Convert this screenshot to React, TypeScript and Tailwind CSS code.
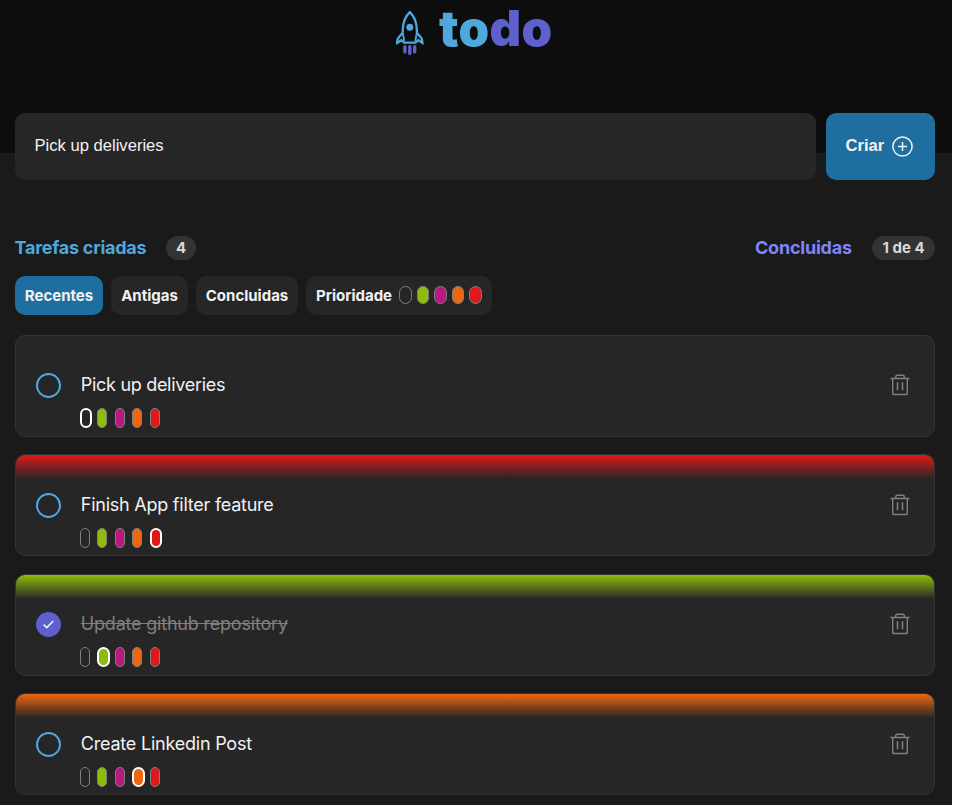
import React from "react";
import clsx from "clsx";

const PILLS = ["bg-transparent", "bg-[#8fbc0b]", "bg-[#ba1880]", "bg-[#ee6611]", "bg-[#df1919]"];

const TASKS = [
  { title: "Pick up deliveries", level: 0, done: false, glow: "", spacing: "tracking-[-0.3px]" },
  { title: "Finish App filter feature", level: 4, done: false, glow: "from-[#df1919]", spacing: "tracking-[-0.24px]" },
  { title: "Update github repository", level: 1, done: true, glow: "from-[#8fbc0b]", spacing: "tracking-[-0.2px]" },
  { title: "Create Linkedin Post", level: 3, done: false, glow: "from-[#ee6611]", spacing: "tracking-[-0.22px]" },
];

function Rocket() {
  return (
    <svg width="28" height="46" viewBox="0 0 28 46" fill="none" className="mt-[10px] shrink-0">
      <path
        d="M13.8 2.2C9.4 6.4 7 12.500 6.800 19.500L6.600 23 3 27C1.300 29 1.100 30.600 1.100 33l4.300-2.800 2.600 2.400h11.600l2.600-2.400 4.300 2.800c0-2.400-.2-4-1.900-6L21 23l-.2-3.500C20.600 12.500 18.200 6.400 13.800 2.200Z"
        stroke="#4EA8DE"
        strokeWidth="2.300"
      />
      <path d="M6.700 22.500 8.300 31M20.900 22.500 19.300 31" stroke="#4EA8DE" strokeWidth="1.800" />
      <circle cx="13.800" cy="17.300" r="3.500" fill="#4EA8DE" />
      <path d="M8.900 36.700v5.200M13.800 36.700v6.800M18.700 36.700v5.200" stroke="#5E60CE" strokeWidth="3.400" strokeLinecap="round" />
    </svg>
  );
}

function Trash() {
  return (
    <svg width="20" height="22" viewBox="0 0 20 22" fill="none" stroke="#808080" strokeWidth="1.400">
      <path d="M.5 4.500h19M2.700 4.500v15.300q0 .7.700.7h13.200q.7 0 .7-.7V4.500M5.700 4.500V2.800q0-1.500 1.500-1.500h5.600q1.500 0 1.500 1.500v1.700" />
      <path d="M7.500 8.300v7.900M12.500 8.300v7.900" strokeWidth="1.600" />
    </svg>
  );
}

function Priorities({ level }: { level: number }) {
  return (
    <div className="flex">
      {PILLS.map((color, i) => (
        <div key={i} className="w-[17.5px]">
          <div
            className={clsx(
              "h-5 rounded-full",
              color,
              i === level ? "w-[12.5px] border-2 border-white" : "w-[10px] border border-[#808080]"
            )}
          />
        </div>
      ))}
    </div>
  );
}

function Task({ title, level, done, glow, spacing }: (typeof TASKS)[number]) {
  return (
    <li className="h-[102px] overflow-hidden rounded-[10px] border border-[#333333] bg-[#262626]">
      <div className={clsx("h-6", glow && "bg-linear-to-b to-transparent", glow)} />
      <div className="flex pt-[13.500px] pl-5 pr-[23.600px]">
        <div
          className={clsx(
            "flex size-[25px] shrink-0 items-center justify-center rounded-full",
            done ? "bg-[#5E60CE]" : "border-2 border-[#4EA8DE]"
          )}
        >
          {done && (
            <svg width="11" height="9" viewBox="0 0 11 9" fill="none" stroke="#f2f2f2" strokeWidth="1.500">
              <path d="m.6 4.600 3.200 3L10.200 1" />
            </svg>
          )}
        </div>
        <div className="ml-[19.800px] flex-1">
          <p
            className={clsx(
              "h-[35px] text-[18px] leading-6",
              spacing,
              done ? "text-[#808080] line-through" : "text-[#f2f2f2]"
            )}
          >
            {title}
          </p>
          <div className="-ml-px">
            <Priorities level={level} />
          </div>
        </div>
        <div className="pt-px">
          <Trash />
        </div>
      </div>
    </li>
  );
}

export default function App() {
  return (
    <div className="h-[805px] w-[952px] overflow-hidden bg-[#1a1a1a] font-['Inter',sans-serif] text-[#f2f2f2]">
      <header className="flex h-[153px] bg-[#0d0d0d] pl-[396px]">
        <Rocket />
        <h1 className="ml-[15px] text-[49px] leading-[58px] font-black tracking-[0.4px] text-[#4EA8DE]">
          to<span className="text-[#5E60CE]">do</span>
        </h1>
      </header>
      <main className="-mt-10 ml-[15px] w-[920px]">
        <form className="flex h-[67px] gap-[10px] font-['Liberation_Sans',Arial,sans-serif] text-[16.600px]">
          <div className="flex w-[801px] items-center rounded-[10px] bg-[#262626] pl-[19.500px]">
            Pick up deliveries
          </div>
          <button type="button" className="flex w-[109px] items-center rounded-[10px] bg-[#1e6f9f] pl-5 font-bold">
            <span className="-ml-[0.500px] w-[46.500px] text-left">Criar</span>
            <svg width="21" height="21" viewBox="0 0 21 21" fill="none" stroke="#f2f2f2" strokeWidth="1.500">
              <circle cx="10.500" cy="10.500" r="9.600" />
              <path d="M10.500 6v9M6 10.500h9" />
            </svg>
          </button>
        </form>
        <div className="mt-14 flex h-6 items-center text-[18px] font-bold">
          <h2 className="-ml-[0.500px] w-[151.500px] pb-[2px] tracking-[-0.250px] text-[#4EA8DE]">Tarefas criadas</h2>
          <span className="flex h-6 w-[30px] items-center justify-center rounded-full bg-[#333333] text-[15px] text-[#d9d9d9]">4</span>
          <h2 className="ml-auto w-[117px] pb-[2px] tracking-[-0.220px] text-[#8284fa]">Concluidas</h2>
          <span className="flex h-6 w-[63px] items-center justify-center rounded-full bg-[#333333] text-[15px] text-[#d9d9d9]">1 de 4</span>
        </div>
        <nav className="mt-4 flex h-[39px] gap-2 text-[15px] font-bold">
          <button className="w-[88px] rounded-[10px] bg-[#1e6f9f] pt-[2px]">Recentes</button>
          <button className="w-[77px] rounded-[10px] bg-[#262626] pt-[2px]">Antigas</button>
          <button className="w-[102px] rounded-[10px] bg-[#262626] pt-[2px]">Concluidas</button>
          <div className="flex w-[186px] items-center rounded-[10px] bg-[#262626] pl-[10px]">
            <span className="w-[83px] pt-[2px]">Prioridade</span>
            <div className="flex gap-[5px] pb-[2px]">
              {PILLS.map((color, i) => (
                <i key={i} className={clsx("h-[18px] w-[12.5px] rounded-full border border-[#808080]", color)} />
              ))}
            </div>
          </div>
        </nav>
        <ul className="mt-[19.600px] flex flex-col gap-[17.500px]">
          {TASKS.map((task) => (
            <Task key={task.title} {...task} />
          ))}
        </ul>
      </main>
    </div>
  );
}
